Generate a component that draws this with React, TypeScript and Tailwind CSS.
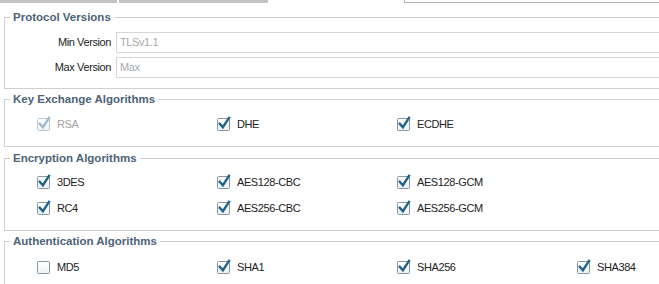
import type { ReactNode } from 'react';

function Check({ checked = true, disabled = false }: { checked?: boolean; disabled?: boolean }) {
  const border = disabled ? '#b9c6cf' : '#8597a3';
  const mark = disabled ? '#9fbbcf' : '#23638c';
  return (
    <svg width="15" height="16" viewBox="0 0 15 16" className="shrink-0">
      <defs>
        <linearGradient id="cbg" x1="0" y1="0" x2="0" y2="1">
          <stop offset="0" stopColor="#ffffff" />
          <stop offset="1" stopColor="#eef2f5" />
        </linearGradient>
      </defs>
      <rect x="0.5" y="2.5" width="12" height="12" rx="1" fill="url(#cbg)" stroke={border} />
      {checked && (
        <path d="M2.8 7.8 L5.9 11.2 L12 1.8" fill="none" stroke={mark} strokeWidth="2.4" strokeLinecap="square" strokeLinejoin="miter" />
      )}
    </svg>
  );
}

function Item({ label, checked = true, disabled = false }: { label: string; checked?: boolean; disabled?: boolean }) {
  return (
    <div className="flex h-[26px] items-center gap-[5px]">
      <Check checked={checked} disabled={disabled} />
      <span className={disabled ? 'text-[#a3a3a3]' : 'text-[#222]'}>{label}</span>
    </div>
  );
}

function Group({ title, className, children }: { title: string; className?: string; children: ReactNode }) {
  return (
    <fieldset className={`ml-[4px] border border-[#d0d0d0] ${className ?? ''}`}>
      <legend className="ml-[5px] px-[3px] text-[11.5px] leading-[14px] font-bold tracking-normal text-[#4b6378]">
        {title}
      </legend>
      {children}
    </fieldset>
  );
}

const inputCls = 'h-[21px] flex-1 border border-[#d6d6d6] bg-white pl-[3px] leading-[19px] text-[#a8a8a8]';

export default function App() {
  return (
    <div className="h-[284px] w-[659px] overflow-hidden bg-white font-['Liberation_Sans',Arial,sans-serif] text-[11px] tracking-[-0.4px]">
      <div className="w-[700px]">
        {/* tab strip, cut off at top */}
        <div className="flex h-[4px]">
          <div className="h-[3px] w-[117px] bg-[#c3c3c3]" />
          <div className="w-[2px]" />
          <div className="h-[3px] w-[149px] bg-[#c3c3c3]" />
          <div className="w-[136px]" />
          <div className="h-[3px] flex-1 border-b border-l border-[#b4b4b4]" />
        </div>

        <Group title="Protocol Versions" className="mt-[6px] pt-[8px] pb-[10px]">
          <div className="flex flex-col gap-[4px]">
            <div className="flex items-center">
              <label className="w-[106px] text-right text-[#222]">Min Version</label>
              <div className={`ml-[5px] ${inputCls}`}>TLSv1.1</div>
            </div>
            <div className="flex items-center">
              <label className="w-[106px] text-right text-[#222]">Max Version</label>
              <div className={`ml-[5px] ${inputCls}`}>Max</div>
            </div>
          </div>
        </Group>

        <Group title="Key Exchange Algorithms" className="mt-[3px] pt-[5px] pb-[9px]">
          <div className="grid grid-cols-[180px_180px_180px_180px] pl-[32px]">
            <Item label="RSA" disabled />
            <Item label="DHE" />
            <Item label="ECDHE" />
          </div>
        </Group>

        <Group title="Encryption Algorithms" className="mt-[4px] pt-[4px] pb-[9px]">
          <div className="grid grid-cols-[180px_180px_180px_180px] pl-[32px]">
            <Item label="3DES" />
            <Item label="AES128-CBC" />
            <Item label="AES128-GCM" />
            <div />
            <Item label="RC4" />
            <Item label="AES256-CBC" />
            <Item label="AES256-GCM" />
          </div>
        </Group>

        <Group title="Authentication Algorithms" className="mt-[3px] pt-[6px] pb-[9px]">
          <div className="grid grid-cols-[180px_180px_180px_180px] pl-[32px]">
            <Item label="MD5" checked={false} />
            <Item label="SHA1" />
            <Item label="SHA256" />
            <Item label="SHA384" />
          </div>
        </Group>
      </div>
    </div>
  );
}
